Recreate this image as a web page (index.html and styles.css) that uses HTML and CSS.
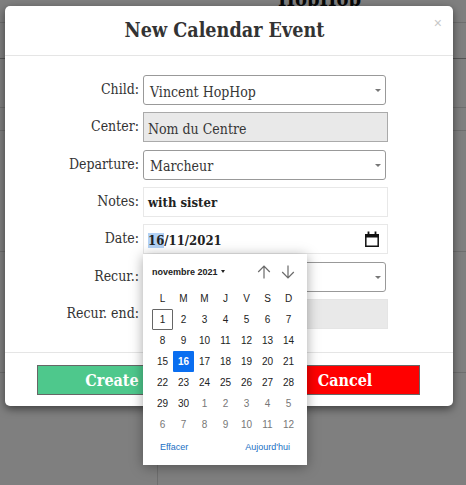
FILE: index.html
```html
<!DOCTYPE html>
<html lang="fr">
<head>
    <meta charset="UTF-8">
    <meta name="viewport" content="width=device-width, initial-scale=1.0">
    <title>New Calendar Event</title>
    <link rel="stylesheet" href="styles.css">
</head>
<body>
    <div class="page-behind">
        <div class="behind-name">HopHop</div>
        <div class="behind-rule rule-1"></div>
        <div class="behind-rule rule-2"></div>
        <div class="behind-rule rule-3"></div>
        <div class="behind-rule rule-4"></div>
        <div class="behind-rule rule-5"></div>
        <div class="behind-rule rule-6"></div>
        <div class="behind-col"></div>
    </div>
    <div class="backdrop"></div>

    <div class="modal">
        <div class="modal-header">
            <h1>New Calendar Event</h1>
            <span class="close">×</span>
        </div>

        <div class="modal-body">
            <div class="form-row">
                <label>Child:</label>
                <div class="field select">Vincent HopHop<span class="caret"></span></div>
            </div>
            <div class="form-row">
                <label>Center:</label>
                <div class="field disabled">Nom du Centre</div>
            </div>
            <div class="form-row">
                <label>Departure:</label>
                <div class="field select">Marcheur<span class="caret"></span></div>
            </div>
            <div class="form-row">
                <label>Notes:</label>
                <div class="field input">with sister</div>
            </div>
            <div class="form-row">
                <label>Date:</label>
                <div class="field input"><span><span class="picked">16</span>/11/2021</span>
                    <svg class="cal-icon" width="14" height="16" viewBox="0 0 14 16">
                        <path d="M.8 3.8h12.4v11.4H.8z" fill="none" stroke="#111" stroke-width="1.5"/>
                        <path d="M0 3h14v3.4H0zM2.6 .6h1.8v3H2.6zM9.6 .6h1.8v3H9.6z" fill="#111"/>
                    </svg>
                </div>
            </div>
            <div class="form-row">
                <label>Recur.:</label>
                <div class="field select"><span class="caret"></span></div>
            </div>
            <div class="form-row">
                <label>Recur. end:</label>
                <div class="field disabled no-border"></div>
            </div>
        </div>

        <div class="modal-footer">
            <button class="btn btn-create">Create</button>
            <button class="btn btn-cancel">Cancel</button>
        </div>
    </div>

    <div class="datepicker">
        <div class="dp-head">
            <span class="dp-month">novembre 2021 <span class="dp-down"></span></span>
            <div class="dp-arrows">
                <svg width="14" height="14" viewBox="0 0 14 14"><path d="M7 13.5V1M1.2 7L7 1l5.8 6" fill="none" stroke="#6a6a6a" stroke-width="1.2"/></svg>
                <svg width="14" height="14" viewBox="0 0 14 14"><path d="M7 .5V13M1.2 7L7 13l5.8-6" fill="none" stroke="#6a6a6a" stroke-width="1.2"/></svg>
            </div>
        </div>
        <div class="dp-grid">
            <span class="dow">L</span><span class="dow">M</span><span class="dow">M</span><span class="dow">J</span><span class="dow">V</span><span class="dow">S</span><span class="dow">D</span>
            <span class="today">1</span><span>2</span><span>3</span><span>4</span><span>5</span><span>6</span><span>7</span>
            <span>8</span><span>9</span><span>10</span><span>11</span><span>12</span><span>13</span><span>14</span>
            <span>15</span><span class="selected">16</span><span>17</span><span>18</span><span>19</span><span>20</span><span>21</span>
            <span>22</span><span>23</span><span>24</span><span>25</span><span>26</span><span>27</span><span>28</span>
            <span>29</span><span>30</span><span class="other">1</span><span class="other">2</span><span class="other">3</span><span class="other">4</span><span class="other">5</span>
            <span class="other">6</span><span class="other">7</span><span class="other">8</span><span class="other">9</span><span class="other">10</span><span class="other">11</span><span class="other">12</span>
        </div>
        <div class="dp-foot">
            <a>Effacer</a>
            <a>Aujourd'hui</a>
        </div>
    </div>
</body>
</html>
```

FILE: styles.css
```css
* {
    box-sizing: border-box;
}
body {
    margin: 0;
    width: 466px;
    height: 485px;
    overflow: hidden;
    position: relative;
    background: #fff;
    font-family: "DejaVu Serif Condensed", "DejaVu Serif", serif;
    color: #363636;
}

/* page under the backdrop */
.behind-name {
    position: absolute;
    left: 278px;
    top: -11px;
    font-size: 20px;
    line-height: 20px;
    font-weight: bold;
    color: #111;
}
.behind-rule {
    position: absolute;
    left: 0;
    right: 0;
    height: 1px;
    background: #ddd;
}
.rule-1 { top: 22px; }
.rule-2 { top: 58px; background: #aaa; }
.rule-3 { top: 107px; }
.rule-4 { top: 130px; }
.rule-5 { top: 251px; }
.rule-6 { top: 372px; }
.behind-col {
    position: absolute;
    left: 157px;
    top: 400px;
    bottom: 0;
    width: 1px;
    background: #ddd;
}
.backdrop {
    position: absolute;
    inset: 0;
    background: rgba(0, 0, 0, 0.5);
}

/* modal */
.modal {
    position: absolute;
    left: 5px;
    top: 6px;
    width: 448px;
    height: 400px;
    background: #fff;
    border-radius: 5px;
    box-shadow: 0 3px 9px rgba(0, 0, 0, 0.5);
}
.modal-header {
    height: 50px;
    border-bottom: 1px solid #e5e5e5;
    position: relative;
    text-align: center;
    padding-right: 9px;
}
.modal-header h1 {
    margin: 0;
    padding-top: 12px;
    font-size: 19.6px;
    line-height: 26px;
    font-weight: bold;
    color: #333;
}
.close {
    position: absolute;
    right: 11px;
    top: 9px;
    font-family: "Liberation Sans", sans-serif;
    font-size: 14px;
    color: #c8c8c8;
}
.modal-body {
    padding: 19px 0 0;
    height: 296px;
    display: flex;
    flex-direction: column;
    gap: 7.33px;
}
.form-row {
    display: flex;
    align-items: flex-start;
    height: 30px;
}
.form-row label {
    width: 134px;
    text-align: right;
    font-size: 14px;
    line-height: 28px;
    color: #333;
}
.field {
    width: 245px;
    height: 30px;
    margin-left: 4px;
    font-size: 14px;
    line-height: 30px;
    padding: 3px 4px 0;
    display: flex;
    align-items: center;
    justify-content: space-between;
    position: relative;
}
.select {
    width: 243px;
    padding-left: 6px;
    border: 1px solid #999;
    border-radius: 3px;
    background: #fff;
}
.caret {
    position: absolute;
    right: 4px;
    top: 13px;
    border-left: 3px solid transparent;
    border-right: 3px solid transparent;
    border-top: 3px solid #777;
}
.disabled {
    background: #e9e9e9;
    border: 1px solid #aaa;
}
.no-border {
    border-color: #e5e5e5;
}
.input {
    border: 1px solid #e8e8e8;
    font-weight: bold;
    font-size: 13px;
    color: #222;
}
.picked {
    background: #b3d2f5;
}
.cal-icon {
    margin: -3px 4px 0 0;
}

.modal-footer {
    border-top: 1px solid #e5e5e5;
    padding: 12px 33px 0 32px;
    display: flex;
    justify-content: space-between;
}
.btn {
    width: 150px;
    height: 30px;
    border: 1px solid #666;
    color: #fff;
    font-family: inherit;
    font-size: 16px;
    font-weight: bold;
    padding: 0;
}
.btn-create {
    background: #4ec88c;
}
.btn-cancel {
    background: #f00;
}

/* date popup */
.datepicker {
    position: absolute;
    left: 143px;
    top: 254px;
    width: 164px;
    height: 211px;
    background: #fff;
    box-shadow: 0 2px 12px rgba(0, 0, 0, 0.35);
    font-family: "Liberation Sans", sans-serif;
    font-size: 10px;
    color: #222;
}
.dp-head {
    height: 34px;
    padding: 11px 12px 0 9px;
    display: flex;
    justify-content: space-between;
}
.dp-month {
    font-weight: bold;
    font-size: 9px;
    line-height: 14px;
    white-space: nowrap;
}
.dp-down {
    display: inline-block;
    vertical-align: 2px;
    margin-left: 1px;
    border-left: 2.5px solid transparent;
    border-right: 2.5px solid transparent;
    border-top: 3px solid #222;
}
.dp-arrows {
    display: flex;
    gap: 10px;
}
.dp-grid {
    display: grid;
    grid-template-columns: repeat(7, 21px);
    grid-auto-rows: 21px;
    padding-left: 9px;
}
.dp-grid span {
    display: flex;
    align-items: center;
    justify-content: center;
}
.dp-grid .today {
    border: 1px solid #666;
    border-radius: 1px;
}
.dp-grid .selected {
    background: #0a6ef0;
    color: #fff;
    font-weight: bold;
    border-radius: 1px;
}
.dp-grid .other {
    color: #777;
}
.dp-foot {
    display: flex;
    justify-content: space-between;
    padding: 7px 17px 0 17px;
    color: #1a6fc4;
    font-size: 9px;
}
```
